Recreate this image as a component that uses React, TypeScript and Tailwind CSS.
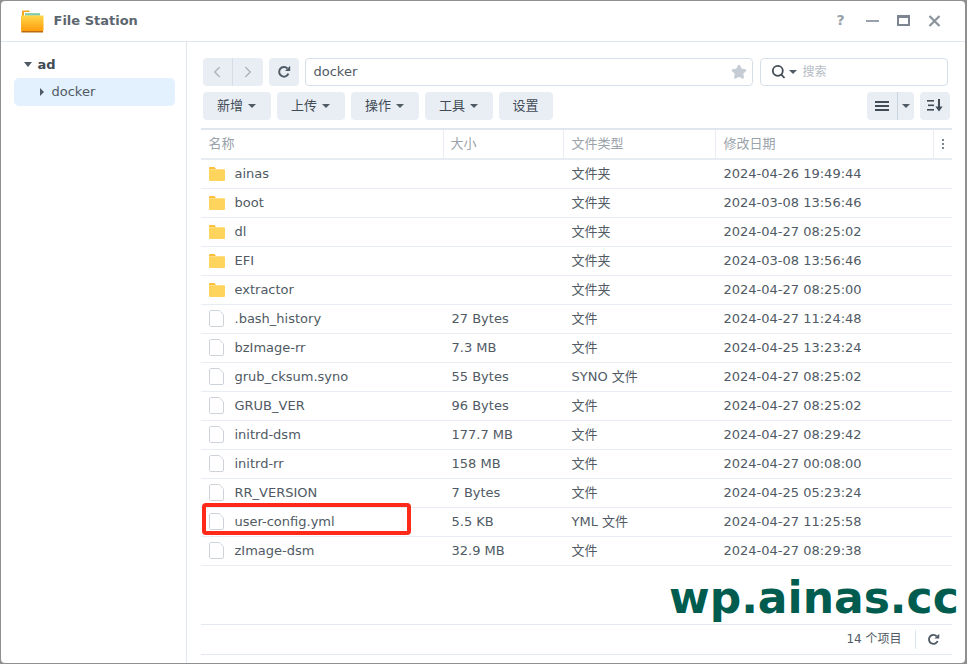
import React from "react";
import { ChevronLeft, ChevronRight, Star } from "lucide-react";

const rows = [
  { name: "ainas", size: "", type: "文件夹", date: "2024-04-26 19:49:44", dir: true },
  { name: "boot", size: "", type: "文件夹", date: "2024-03-08 13:56:46", dir: true },
  { name: "dl", size: "", type: "文件夹", date: "2024-04-27 08:25:02", dir: true },
  { name: "EFI", size: "", type: "文件夹", date: "2024-03-08 13:56:46", dir: true },
  { name: "extractor", size: "", type: "文件夹", date: "2024-04-27 08:25:00", dir: true },
  { name: ".bash_history", size: "27 Bytes", type: "文件", date: "2024-04-27 11:24:48" },
  { name: "bzImage-rr", size: "7.3 MB", type: "文件", date: "2024-04-25 13:23:24" },
  { name: "grub_cksum.syno", size: "55 Bytes", type: "SYNO 文件", date: "2024-04-27 08:25:02" },
  { name: "GRUB_VER", size: "96 Bytes", type: "文件", date: "2024-04-27 08:25:02" },
  { name: "initrd-dsm", size: "177.7 MB", type: "文件", date: "2024-04-27 08:29:42" },
  { name: "initrd-rr", size: "158 MB", type: "文件", date: "2024-04-27 00:08:00" },
  { name: "RR_VERSION", size: "7 Bytes", type: "文件", date: "2024-04-25 05:23:24" },
  { name: "user-config.yml", size: "5.5 KB", type: "YML 文件", date: "2024-04-27 11:25:58" },
  { name: "zImage-dsm", size: "32.9 MB", type: "文件", date: "2024-04-27 08:29:38" },
];

const Caret = ({ className = "" }: { className?: string }) => (
  <span className={`inline-block w-0 h-0 border-x-[4px] border-x-transparent border-t-[4px] border-t-[#505a64] ${className}`} />
);

const FolderIcon = () => (
  <svg width="16" height="14" viewBox="0 0 16 14">
    <path d="M0 1a1 1 0 0 1 1-1h4.5l1.5 2H0z" fill="#fbbf3c" />
    <path d="M0 2.2h15a1 1 0 0 1 1 1V13a1 1 0 0 1-1 1H1a1 1 0 0 1-1-1z" fill="#ffd45c" />
  </svg>
);

const FileIcon = () => (
  <svg width="15" height="17" viewBox="0 0 15 17" fill="none">
    <path d="M1.5.5h8.7l4.3 4.3v10.2a1.5 1.5 0 0 1-1.5 1.5h-11.5a1 1 0 0 1-1-1v-13.5a1.5 1.5 0 0 1 1-1.5z" fill="#fff" stroke="#ced3d9" />
  </svg>
);

const AppIcon = () => (
  <svg width="26" height="26" viewBox="0 0 26 26">
    <defs>
      <linearGradient id="fold" x1="0" y1="0" x2="0" y2="1">
        <stop offset="0" stopColor="#ffd84a" />
        <stop offset="1" stopColor="#ff9a0a" />
      </linearGradient>
    </defs>
    <path d="M2 3.5a1 1 0 0 1 1-1h6l1 1.6h11v6H2z" fill="#f2a71e" />
    <rect x="4" y="4" width="17" height="8" fill="#fff" />
    <rect x="5" y="5.2" width="15" height="2.5" fill="#7fc9a5" />
    <path d="M1 7.5h22.5v14.5a1.5 1.5 0 0 1-1.5 1.5H2.5A1.5 1.5 0 0 1 1 22z" fill="url(#fold)" />
    <rect x="1.5" y="23" width="21.5" height="1.5" fill="#b96a10" />
  </svg>
);

const Refresh = ({ size = 14 }: { size?: number }) => (
  <svg width={size} height={size} viewBox="0 0 14 14" fill="none">
    <path d="M11.4 8.6A4.8 4.8 0 1 1 10.4 3.5" stroke="#4f5a65" strokeWidth="2" />
    <path d="M8 5.9h5.2V.8z" fill="#4f5a65" />
  </svg>
);

const ToolButton = ({ label, caret = true, width }: { label: string; caret?: boolean; width: string }) => (
  <button className={`h-7 ${width} rounded-[4px] bg-[#e9eef5] flex items-center justify-center gap-[5px] text-[13px] text-[#414b55]`}>
    {label}
    {caret && <Caret />}
  </button>
);

export default function App() {
  return (
    <div
      className="relative w-[967px] h-[664px] overflow-hidden bg-[#8f8f8f] text-[13px] text-[#414b55]"
      style={{ fontFamily: '"DejaVu Sans", "Noto Sans CJK SC", sans-serif' }}
    >
      <div className="w-[964px] h-[662px] ml-[0.5px] mt-[0.5px] rounded-[4px] bg-white flex flex-col overflow-hidden">
        {/* Titlebar */}
        <div className="h-[41px] shrink-0 border-b border-[#dfe6ed] flex items-center pl-[19px] pr-[24px]">
          <AppIcon />
          <span className="ml-[8px] font-bold text-[13px] text-[#5c6670]">File Station</span>
          <div className="ml-auto flex items-center gap-[18px] text-[#98a1aa]">
            <span className="w-[14px] text-center text-[14px] font-bold">?</span>
            <span className="w-[13px] h-[2px] bg-[#98a1aa]" />
            <span className="w-[13px] h-[11px] border-[2px] border-t-[3px] border-[#7d8690]" />
            <svg width="13" height="12" viewBox="0 0 13 12" stroke="#8b949d" strokeWidth="2.2"><path d="M1.5 1l10 10M11.5 1l-10 10" /></svg>
          </div>
        </div>

        <div className="flex-1 flex min-h-0">
          {/* Sidebar */}
          <div className="w-[186px] shrink-0 border-r border-[#dfe6ed] pt-[10px] px-[13px]">
            <div className="h-[26px] flex items-center pl-[10px] gap-[6px] font-bold text-[#414b55]">
              <Caret className="border-x-[4px] border-t-[5px]" />
              ad
            </div>
            <div className="h-[28px] w-[161px] rounded-[5px] bg-[#e3f0fd] flex items-center pl-[26px] gap-[8px] text-[#505a64]">
              <span className="w-0 h-0 border-y-[4px] border-y-transparent border-l-[4px] border-l-[#505a64]" />
              docker
            </div>
          </div>

          {/* Main */}
          <div className="flex-1 min-w-0 pt-[16px] pl-[14px] pr-[13px]">
            <div className="pl-[2px] pr-[2px] flex flex-col gap-[6px]">
              <div className="flex h-7">
                <div className="w-[60px] flex rounded-[4px] bg-[#e9eef5]">
                  <div className="flex-1 flex items-center justify-center border-r border-[#d5dde6]"><ChevronLeft size={18} strokeWidth={2} color="#adb5bd" /></div>
                  <div className="flex-1 flex items-center justify-center"><ChevronRight size={18} strokeWidth={2} color="#adb5bd" /></div>
                </div>
                <div className="ml-[6px] w-[30px] rounded-[4px] bg-[#e9eef5] flex items-center justify-center"><Refresh /></div>
                <div className="ml-[6px] w-[448px] rounded-[4px] border border-[#d5dfe9] flex items-center pl-[8px] pr-[5px] text-[#505a64]">
                  docker
                  <Star size={16} fill="#c5ccd4" color="#c5ccd4" className="ml-auto" />
                </div>
                <div className="ml-[7px] w-[188px] rounded-[4px] border border-[#d5dfe9] flex items-center pl-[10px] gap-[3px] text-[#b5bcc4]">
                  <svg width="15" height="15" viewBox="0 0 15 15" fill="none" stroke="#414b55" strokeWidth="1.8"><circle cx="6.8" cy="6.8" r="5" /><path d="M10.2 10.4l3.3 3.6" /></svg>
                  <Caret className="border-x-[3px] border-t-[3px]" />
                  <span className="ml-[3px] text-[12px]">搜索</span>
                </div>
              </div>
              <div className="flex h-7 gap-[6px]">
                <ToolButton label="新增" width="w-[68px]" />
                <ToolButton label="上传" width="w-[68px]" />
                <ToolButton label="操作" width="w-[68px]" />
                <ToolButton label="工具" width="w-[68px]" />
                <ToolButton label="设置" caret={false} width="w-[54px]" />
                <div className="ml-auto w-[47px] flex rounded-[4px] bg-[#e9eef5]">
                  <div className="w-[31px] flex flex-col items-center justify-center gap-[2px] border-r border-[#c9d3de]">
                    <span className="w-[14px] h-[2px] bg-[#414b55]" />
                    <span className="w-[14px] h-[2px] bg-[#414b55]" />
                    <span className="w-[14px] h-[2px] bg-[#414b55]" />
                  </div>
                  <div className="flex-1 flex items-center justify-center"><Caret className="border-x-[3px] border-t-[3px]" /></div>
                </div>
                <div className="w-[30px] rounded-[4px] bg-[#e9eef5] flex items-center justify-center">
                  <svg width="16" height="13" viewBox="0 0 16 13" fill="#414b55">
                    <rect x="0" y="1" width="7" height="1.6" />
                    <rect x="1" y="5.5" width="6" height="1.6" />
                    <rect x="0" y="10" width="7" height="1.6" />
                    <path d="M11 0h2v7.5h2.6L12 12.5 8.4 7.5H11z" />
                  </svg>
                </div>
              </div>
            </div>

            {/* Table */}
            <div className="mt-[8px] border-t-[2px] border-[#dfe6ed]">
              <div className="h-[28px] flex items-center border-b-[2px] border-[#e8edf3] text-[#9aa2aa] box-content">
                <div className="w-[243px] h-full flex items-center pl-[8px] border-r border-[#e8edf3]">名称</div>
                <div className="w-[120px] h-full flex items-center pl-[7px] border-r border-[#e8edf3]">大小</div>
                <div className="w-[152px] h-full flex items-center pl-[8px] border-r border-[#e8edf3]">文件类型</div>
                <div className="w-[218px] h-full flex items-center pl-[8px] border-r border-[#e8edf3]">修改日期</div>
                <div className="flex-1 flex flex-col items-center gap-[2px]">
                  <span className="w-[2px] h-[2px] bg-[#7d8690]" />
                  <span className="w-[2px] h-[2px] bg-[#7d8690]" />
                  <span className="w-[2px] h-[2px] bg-[#7d8690]" />
                </div>
              </div>
              {rows.map((r) => (
                <div key={r.name} className="h-[29px] flex items-center border-b border-[#e8edf3] text-[#505a64]">
                  <div className="w-[243px] flex items-center">
                    <span className="w-[34px] pl-[8px] flex items-center">{r.dir ? <FolderIcon /> : <FileIcon />}</span>
                    {r.name}
                  </div>
                  <div className="w-[120px] pl-[8px]">{r.size}</div>
                  <div className="w-[152px] pl-[8px]">{r.type}</div>
                  <div className="pl-[8px]">{r.date}</div>
                </div>
              ))}
            </div>

            {/* Footer */}
            <div className="mt-[58px] h-[29px] border-y border-[#e3e9ef] box-content flex items-center justify-end pr-[12px]">
              <span className="text-[#505a64] text-[12px]">14 个项目</span>
              <span className="ml-[13px] mr-[11px] w-px h-[19px] bg-[#dfe6ed]" />
              <Refresh size={13} />
            </div>
          </div>
        </div>
      </div>

      {/* Annotation overlay */}
      <div className="absolute left-[202px] top-[503px] w-[209px] h-[32px] border-[4px] border-[#ff2a1a] rounded-[4px]" />
      <div className="absolute left-[669px] top-[572px] text-[44px] leading-[52px] font-bold text-[#005c4e] whitespace-nowrap">wp.ainas.cc</div>
    </div>
  );
}
